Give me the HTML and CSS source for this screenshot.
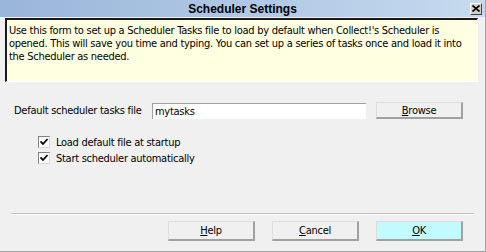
FILE: index.html
```html
<!DOCTYPE html>
<html lang="en">
<head>
  <meta charset="UTF-8">
  <title>Scheduler Settings</title>
  <link rel="stylesheet" href="styles.css">
</head>
<body>
  <div class="dialog">
    <div class="titlebar">
      <span></span>
      <h1>Scheduler Settings</h1>
      <button class="close" aria-label="Close">
        <svg viewBox="0 0 8 7" width="8" height="7">
          <path d="M0.5 0.5 L7.5 6.5 M7.5 0.5 L0.5 6.5" stroke="#000" stroke-width="1.6"></path>
        </svg>
      </button>
    </div>

    <div class="info">
      Use this form to set up a Scheduler Tasks file to load by default when Collect!'s Scheduler is<br>
      opened. This will save you time and typing. You can set up a series of tasks once and load it into<br>
      the Scheduler as needed.
    </div>

    <div class="file-row">
      <label for="taskfile">Default scheduler tasks file</label>
      <input type="text" id="taskfile" value="mytasks">
      <button class="btn"><u>B</u>rowse</button>
    </div>

    <div class="checks">
      <label class="check">
        <span class="box">
          <svg viewBox="0 0 8 8" width="8" height="8"><path d="M0.5 3.5 L3 6 L7.5 1" fill="none" stroke="#000" stroke-width="1.8"></path></svg>
        </span>
        Load default file at startup
      </label>
      <label class="check">
        <span class="box">
          <svg viewBox="0 0 8 8" width="8" height="8"><path d="M0.5 3.5 L3 6 L7.5 1" fill="none" stroke="#000" stroke-width="1.8"></path></svg>
        </span>
        Start scheduler automatically
      </label>
    </div>

    <div class="separator"></div>

    <div class="actions">
      <button class="btn"><u>H</u>elp</button>
      <button class="btn"><u>C</u>ancel</button>
      <button class="btn default"><u>O</u>K</button>
    </div>
  </div>
</body>
</html>
```

FILE: styles.css
```css
:root {
  --face: #f0f0f0;
  --info-bg: #ffffe1;
  --edge-dark: #a0a0a0;
  --edge-light: #ffffff;
  --text: #000000;
}

* {
  margin: 0;
  padding: 0;
  box-sizing: border-box;
}

body {
  width: 486px;
  height: 252px;
  font-family: 'Liberation Sans Narrow', 'Arial Narrow', 'DejaVu Sans Condensed', sans-serif;
  font-size: 11px;
  letter-spacing: -0.27px;
  color: var(--text);
  background-color: var(--face);
  overflow: hidden;
}

.dialog {
  width: 486px;
  height: 252px;
  background-color: var(--face);
  border-right: 1px solid var(--edge-dark);
  border-bottom: 1px solid var(--edge-dark);
}

/* Заголовок */
.titlebar {
  height: 17px;
  display: grid;
  grid-template-columns: 1fr auto 1fr;
  align-items: center;
  background: linear-gradient(to right, #99b5d9, #c6daef);
}

.titlebar h1 {
  font-family: 'Liberation Sans', Arial, sans-serif;
  font-size: 12px;
  font-weight: 700;
  letter-spacing: 0;
}

.close {
  justify-self: end;
  margin-right: 3px;
  width: 12px;
  height: 12px;
  display: flex;
  align-items: center;
  justify-content: center;
  background-color: #d4d0c8;
  border: 1px solid;
  border-color: #ffffff #404040 #404040 #ffffff;
}

/* Інфо блок */
.info {
  margin: 1px 7px 0 5px;
  height: 64px;
  padding: 4px 2px 0 2px;
  line-height: 13px;
  background-color: var(--info-bg);
  border-top: 2px solid #1a1a1a;
  border-left: 2px solid #1a1a1a;
  border-right: 1px solid var(--edge-light);
  border-bottom: 1px solid var(--edge-light);
  white-space: nowrap;
}

.file-row {
  display: flex;
  align-items: center;
  margin-top: 20px;
  padding-left: 14px;
  height: 17px;
}

.file-row label {
  width: 138px;
}

.file-row input {
  width: 214px;
  height: 16px;
  padding: 0 2px;
  font-family: inherit;
  font-size: 11px;
  letter-spacing: inherit;
  background-color: #ffffff;
  border: none;
  border-top: 1px solid var(--edge-dark);
  border-left: 1px solid var(--edge-dark);
  outline: none;
}

.file-row .btn {
  margin-left: 10px;
}

.btn {
  width: 87px;
  height: 17px;
  font-family: inherit;
  font-size: 11px;
  letter-spacing: inherit;
  color: var(--text);
  background-color: var(--face);
  border: 1px solid;
  border-color: #dcdcdc var(--edge-dark) var(--edge-dark) #dcdcdc;
  border-width: 1px 2px 2px 1px;
}

.btn u {
  text-decoration-thickness: 1px;
  text-underline-offset: 1px;
}

.btn.default {
  background-color: #c2fbff;
}

/* Чекбокси */
.checks {
  margin-top: 15px;
  padding-left: 38px;
  display: flex;
  flex-direction: column;
}

.check {
  display: flex;
  align-items: center;
  gap: 6px;
  height: 16px;
}

.box {
  width: 12px;
  height: 12px;
  display: flex;
  align-items: center;
  justify-content: center;
  background-color: #ffffff;
  border: 1px solid;
  border-color: #808080 #d8d8d8 #d8d8d8 #808080;
}

.separator {
  margin: 47px 11px 0 11px;
  height: 2px;
  border-top: 1px solid #c0c0c0;
  border-bottom: 1px solid #ffffff;
}

.actions {
  display: flex;
  gap: 17px;
  justify-content: flex-end;
  margin-top: 6px;
  padding-right: 22px;
}

.actions .btn {
  height: 20px;
}
```
